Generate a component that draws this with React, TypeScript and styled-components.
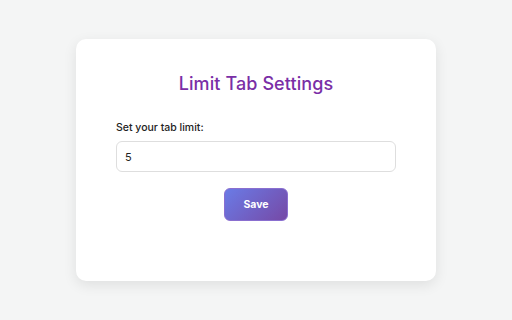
import React from 'react';
import styled, {createGlobalStyle} from 'styled-components';

const GlobalStyle = createGlobalStyle`
  html, body {
    margin: 0;
    padding: 0;
    background: #f4f5f5;
    font-family: 'Inter', 'Open Sans', sans-serif;
  }
`;

const Page = styled.div`
  width: 512px;
  height: 320px;
  display: flex;
  align-items: center;
  justify-content: center;
`;

const Card = styled.div`
  width: 360px;
  height: 242px;
  box-sizing: border-box;
  padding: 32px 40px 0 40px;
  background: #fff;
  border-radius: 10px;
  box-shadow: 0 4px 14px rgba(0, 0, 0, 0.09);
  display: flex;
  flex-direction: column;
`;

const Title = styled.h1`
  margin: 0;
  text-align: center;
  color: #7a2ea6;
  font-size: 18px;
  font-weight: 500;
  line-height: 26px;
  letter-spacing: 0.1px;
`;

const Label = styled.label`
  margin-top: 24px;
  font-size: 10.5px;
  font-weight: 500;
  color: #222;
  line-height: 14px;
`;

const Input = styled.input`
  margin-top: 6px;
  height: 31px;
  box-sizing: border-box;
  border: 1px solid #dedede;
  border-radius: 6px;
  padding: 0 8px;
  font-family: inherit;
  font-size: 11px;
  color: #222;
  outline: none;
`;

const SaveButton = styled.button`
  align-self: center;
  margin-top: 16px;
  width: 64px;
  height: 33px;
  border: 1px solid #8a6fd0;
  border-radius: 6px;
  background: linear-gradient(135deg, #6a7be6 0%, #7649a6 100%);
  color: #fff;
  font-family: inherit;
  font-size: 10.5px;
  font-weight: 700;
  cursor: pointer;
`;

export default function App() {
  return (
    <Page>
      <GlobalStyle />
      <Card>
        <Title>Limit Tab Settings</Title>
        <Label>Set your tab limit:</Label>
        <Input type="number" defaultValue={5} />
        <SaveButton>Save</SaveButton>
      </Card>
    </Page>
  );
}
